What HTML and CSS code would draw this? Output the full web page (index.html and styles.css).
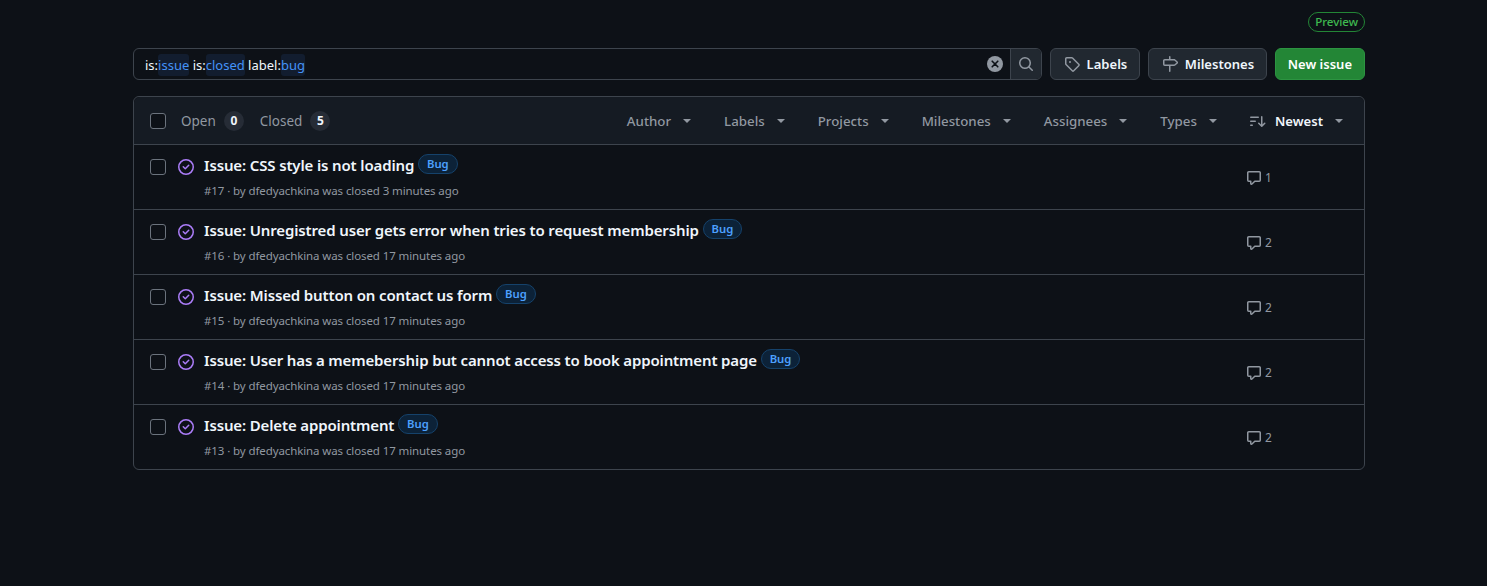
FILE: index.html
```html
<!DOCTYPE html>
<html lang="en">
<head>
    <meta charset="UTF-8">
    <meta name="viewport" content="width=device-width, initial-scale=1.0">
    <title>Issues</title>
    <link rel="stylesheet" href="styles.css">
</head>
<body>
    <div class="container">
        <div class="preview-row"><span class="preview">Preview</span></div>

        <div class="toolbar">
            <div class="search">
                <div class="query">is:<span class="tok">issue</span> is:<span class="tok">closed</span> label:<span class="tok">bug</span></div>
                <svg class="clear" width="16" height="16" viewBox="0 0 16 16"><circle cx="8" cy="8" r="8" fill="#9198a1"/><path d="M5.2 5.2l5.6 5.6M10.8 5.2l-5.6 5.6" stroke="#0d1117" stroke-width="1.6" stroke-linecap="round"/></svg>
                <div class="search-btn">
                    <svg width="16" height="16" viewBox="0 0 16 16" fill="#9198a1"><path d="M10.68 11.74a6 6 0 0 1-7.922-8.982 6 6 0 0 1 8.982 7.922l3.04 3.04a.749.749 0 0 1-.326 1.275.749.749 0 0 1-.734-.215ZM11.5 7a4.499 4.499 0 1 0-8.997 0A4.499 4.499 0 0 0 11.5 7Z"/></svg>
                </div>
            </div>
            <a class="btn"><svg width="16" height="16" viewBox="0 0 16 16" fill="#9198a1"><path d="M1 7.775V2.75C1 1.784 1.784 1 2.75 1h5.025c.464 0 .91.184 1.238.513l6.25 6.25a1.75 1.75 0 0 1 0 2.474l-5.026 5.026a1.75 1.75 0 0 1-2.474 0l-6.25-6.25A1.752 1.752 0 0 1 1 7.775Zm1.5 0c0 .066.026.13.073.177l6.25 6.25a.25.25 0 0 0 .354 0l5.025-5.025a.25.25 0 0 0 0-.354l-6.25-6.25a.25.25 0 0 0-.177-.073H2.75a.25.25 0 0 0-.25.25ZM6 5a1 1 0 1 1 0 2 1 1 0 0 1 0-2Z"/></svg>Labels</a>
            <a class="btn"><svg width="16" height="16" viewBox="0 0 16 16" fill="#9198a1"><path d="M7.75 0a.75.75 0 0 1 .75.75V3h3.634c.414 0 .814.147 1.13.414l2.07 1.75a1.75 1.75 0 0 1 0 2.672l-2.07 1.75a1.75 1.75 0 0 1-1.13.414H8.5v5.25a.75.75 0 0 1-1.5 0V10H2.75A1.75 1.75 0 0 1 1 8.25v-3.5C1 3.784 1.784 3 2.75 3H7V.75A.75.75 0 0 1 7.75 0Zm4.384 8.5a.25.25 0 0 0 .161-.06l2.07-1.75a.248.248 0 0 0 0-.38l-2.07-1.75a.25.25 0 0 0-.161-.06H2.75a.25.25 0 0 0-.25.25v3.5c0 .138.112.25.25.25h9.384Z"/></svg>Milestones</a>
            <a class="btn btn-green">New issue</a>
        </div>

        <div class="box">
            <div class="box-head">
                <span class="check"></span>
                <div class="states">
                    <span class="state">Open <b class="count">0</b></span>
                    <span class="state">Closed <b class="count">5</b></span>
                </div>
                <div class="filters">
                    <span class="filter">Author<i class="caret"></i></span>
                    <span class="filter">Labels<i class="caret"></i></span>
                    <span class="filter">Projects<i class="caret"></i></span>
                    <span class="filter">Milestones<i class="caret"></i></span>
                    <span class="filter">Assignees<i class="caret"></i></span>
                    <span class="filter">Types<i class="caret"></i></span>
                    <span class="filter sort"><svg width="16" height="16" viewBox="0 0 16 16" fill="#9198a1"><path d="M0 4.25a.75.75 0 0 1 .75-.75h7.5a.75.75 0 0 1 0 1.5H.75A.75.75 0 0 1 0 4.25Zm0 4a.75.75 0 0 1 .75-.75h4.5a.75.75 0 0 1 0 1.5H.75A.75.75 0 0 1 0 8.25Zm0 4a.75.75 0 0 1 .75-.75h1.5a.75.75 0 0 1 0 1.5H.75a.75.75 0 0 1-.75-.75ZM12.5 3.75a.75.75 0 0 0-1.5 0v7.69l-1.72-1.72a.75.75 0 1 0-1.06 1.06l3 3a.75.75 0 0 0 1.06 0l3-3a.75.75 0 1 0-1.06-1.06l-1.72 1.72Z"/></svg><strong>Newest</strong><i class="caret"></i></span>
                </div>
            </div>

            <div class="row">
                <span class="check"></span>
                <svg class="closed-icon" width="16" height="16" viewBox="0 0 16 16" fill="#ab7df8"><path d="M11.28 6.78a.75.75 0 0 0-1.06-1.06L7.25 8.69 5.78 7.22a.75.75 0 0 0-1.06 1.06l2 2a.75.75 0 0 0 1.06 0l3.5-3.5Z"/><path d="M16 8A8 8 0 1 1 0 8a8 8 0 0 1 16 0Zm-1.5 0a6.5 6.5 0 1 0-13 0 6.5 6.5 0 0 0 13 0Z"/></svg>
                <div class="main">
                    <div class="title">Issue: CSS style is not loading <span class="bug">Bug</span></div>
                    <div class="meta">#17 · by dfedyachkina was closed 3 minutes ago</div>
                </div>
                <div class="comments"><svg width="16" height="16" viewBox="0 0 16 16" fill="#9198a1"><path d="M1 2.75C1 1.784 1.784 1 2.75 1h10.5c.966 0 1.75.784 1.75 1.75v7.5A1.75 1.75 0 0 1 13.25 12H9.06l-2.573 2.573A1.458 1.458 0 0 1 4 13.543V12H2.75A1.75 1.75 0 0 1 1 10.25Zm1.75-.25a.25.25 0 0 0-.25.25v7.5c0 .138.112.25.25.25h2a.75.75 0 0 1 .75.75v2.19l2.72-2.72a.749.749 0 0 1 .53-.22h4.5a.25.25 0 0 0 .25-.25v-7.5a.25.25 0 0 0-.25-.25Z"/></svg>1</div>
            </div>
            <div class="row">
                <span class="check"></span>
                <svg class="closed-icon" width="16" height="16" viewBox="0 0 16 16" fill="#ab7df8"><path d="M11.28 6.78a.75.75 0 0 0-1.06-1.06L7.25 8.69 5.78 7.22a.75.75 0 0 0-1.06 1.06l2 2a.75.75 0 0 0 1.06 0l3.5-3.5Z"/><path d="M16 8A8 8 0 1 1 0 8a8 8 0 0 1 16 0Zm-1.5 0a6.5 6.5 0 1 0-13 0 6.5 6.5 0 0 0 13 0Z"/></svg>
                <div class="main">
                    <div class="title">Issue: Unregistred user gets error when tries to request membership <span class="bug">Bug</span></div>
                    <div class="meta">#16 · by dfedyachkina was closed 17 minutes ago</div>
                </div>
                <div class="comments"><svg width="16" height="16" viewBox="0 0 16 16" fill="#9198a1"><path d="M1 2.75C1 1.784 1.784 1 2.75 1h10.5c.966 0 1.75.784 1.75 1.75v7.5A1.75 1.75 0 0 1 13.25 12H9.06l-2.573 2.573A1.458 1.458 0 0 1 4 13.543V12H2.75A1.75 1.75 0 0 1 1 10.25Zm1.75-.25a.25.25 0 0 0-.25.25v7.5c0 .138.112.25.25.25h2a.75.75 0 0 1 .75.75v2.19l2.72-2.72a.749.749 0 0 1 .53-.22h4.5a.25.25 0 0 0 .25-.25v-7.5a.25.25 0 0 0-.25-.25Z"/></svg>2</div>
            </div>
            <div class="row">
                <span class="check"></span>
                <svg class="closed-icon" width="16" height="16" viewBox="0 0 16 16" fill="#ab7df8"><path d="M11.28 6.78a.75.75 0 0 0-1.06-1.06L7.25 8.69 5.78 7.22a.75.75 0 0 0-1.06 1.06l2 2a.75.75 0 0 0 1.06 0l3.5-3.5Z"/><path d="M16 8A8 8 0 1 1 0 8a8 8 0 0 1 16 0Zm-1.5 0a6.5 6.5 0 1 0-13 0 6.5 6.5 0 0 0 13 0Z"/></svg>
                <div class="main">
                    <div class="title">Issue: Missed button on contact us form <span class="bug">Bug</span></div>
                    <div class="meta">#15 · by dfedyachkina was closed 17 minutes ago</div>
                </div>
                <div class="comments"><svg width="16" height="16" viewBox="0 0 16 16" fill="#9198a1"><path d="M1 2.75C1 1.784 1.784 1 2.75 1h10.5c.966 0 1.75.784 1.75 1.75v7.5A1.75 1.75 0 0 1 13.25 12H9.06l-2.573 2.573A1.458 1.458 0 0 1 4 13.543V12H2.75A1.75 1.75 0 0 1 1 10.25Zm1.75-.25a.25.25 0 0 0-.25.25v7.5c0 .138.112.25.25.25h2a.75.75 0 0 1 .75.75v2.19l2.72-2.72a.749.749 0 0 1 .53-.22h4.5a.25.25 0 0 0 .25-.25v-7.5a.25.25 0 0 0-.25-.25Z"/></svg>2</div>
            </div>
            <div class="row">
                <span class="check"></span>
                <svg class="closed-icon" width="16" height="16" viewBox="0 0 16 16" fill="#ab7df8"><path d="M11.28 6.78a.75.75 0 0 0-1.06-1.06L7.25 8.69 5.78 7.22a.75.75 0 0 0-1.06 1.06l2 2a.75.75 0 0 0 1.06 0l3.5-3.5Z"/><path d="M16 8A8 8 0 1 1 0 8a8 8 0 0 1 16 0Zm-1.5 0a6.5 6.5 0 1 0-13 0 6.5 6.5 0 0 0 13 0Z"/></svg>
                <div class="main">
                    <div class="title">Issue: User has a memebership but cannot access to book appointment page <span class="bug">Bug</span></div>
                    <div class="meta">#14 · by dfedyachkina was closed 17 minutes ago</div>
                </div>
                <div class="comments"><svg width="16" height="16" viewBox="0 0 16 16" fill="#9198a1"><path d="M1 2.75C1 1.784 1.784 1 2.75 1h10.5c.966 0 1.75.784 1.75 1.75v7.5A1.75 1.75 0 0 1 13.25 12H9.06l-2.573 2.573A1.458 1.458 0 0 1 4 13.543V12H2.75A1.75 1.75 0 0 1 1 10.25Zm1.75-.25a.25.25 0 0 0-.25.25v7.5c0 .138.112.25.25.25h2a.75.75 0 0 1 .75.75v2.19l2.72-2.72a.749.749 0 0 1 .53-.22h4.5a.25.25 0 0 0 .25-.25v-7.5a.25.25 0 0 0-.25-.25Z"/></svg>2</div>
            </div>
            <div class="row">
                <span class="check"></span>
                <svg class="closed-icon" width="16" height="16" viewBox="0 0 16 16" fill="#ab7df8"><path d="M11.28 6.78a.75.75 0 0 0-1.06-1.06L7.25 8.69 5.78 7.22a.75.75 0 0 0-1.06 1.06l2 2a.75.75 0 0 0 1.06 0l3.5-3.5Z"/><path d="M16 8A8 8 0 1 1 0 8a8 8 0 0 1 16 0Zm-1.5 0a6.5 6.5 0 1 0-13 0 6.5 6.5 0 0 0 13 0Z"/></svg>
                <div class="main">
                    <div class="title">Issue: Delete appointment <span class="bug">Bug</span></div>
                    <div class="meta">#13 · by dfedyachkina was closed 17 minutes ago</div>
                </div>
                <div class="comments"><svg width="16" height="16" viewBox="0 0 16 16" fill="#9198a1"><path d="M1 2.75C1 1.784 1.784 1 2.75 1h10.5c.966 0 1.75.784 1.75 1.75v7.5A1.75 1.75 0 0 1 13.25 12H9.06l-2.573 2.573A1.458 1.458 0 0 1 4 13.543V12H2.75A1.75 1.75 0 0 1 1 10.25Zm1.75-.25a.25.25 0 0 0-.25.25v7.5c0 .138.112.25.25.25h2a.75.75 0 0 1 .75.75v2.19l2.72-2.72a.749.749 0 0 1 .53-.22h4.5a.25.25 0 0 0 .25-.25v-7.5a.25.25 0 0 0-.25-.25Z"/></svg>2</div>
            </div>
        </div>
    </div>
</body>
</html>
```

FILE: styles.css
```css
* { box-sizing: border-box; }
body {
    margin: 0;
    background: #0d1117;
    color: #f0f6fc;
    font-family: "Noto Sans", sans-serif;
    font-size: 14px;
}
.container {
    width: 1232px;
    margin: 0 auto 0 133px;
    padding-top: 12px;
}
.preview-row {
    display: flex;
    justify-content: flex-end;
    margin-bottom: 16px;
}
.preview {
    height: 20px;
    line-height: 18px;
    padding: 0 6px;
    font-size: 11.5px;
    font-weight: 500;
    color: #3fb950;
    border: 1px solid #238636;
    border-radius: 10px;
}

.toolbar {
    display: flex;
    gap: 8px;
    height: 32px;
    margin-bottom: 16px;
}
.search {
    flex: 1;
    display: flex;
    align-items: center;
    border: 1px solid #3d444d;
    border-radius: 6px;
    padding-left: 11px;
}
.query { flex: 1; font-size: 13px; padding-top: 1px; }
.tok {
    color: #4493f8;
    background: #121d2f;
    border-radius: 3px;
    padding: 2px 0;
}
.clear { margin-right: 7px; }
.search-btn {
    width: 31px;
    height: 30px;
    display: flex;
    align-items: center;
    justify-content: center;
    background: #212830;
    border-left: 1px solid #3d444d;
    border-radius: 0 5px 5px 0;
}
.btn {
    display: flex;
    align-items: center;
    gap: 7px;
    padding: 0 11.6px 0 13px;
    font-weight: 600;
    font-size: 13.05px;
    background: #212830;
    border: 1px solid #3d444d;
    border-radius: 6px;
}
.btn-green {
    padding: 0 12px;
    font-size: 13px;
    background: #238636;
    border-color: #2c9441;
    color: #fff;
}

.box {
    border: 1px solid #3d444d;
    border-radius: 6px;
}
.box-head {
    height: 47px;
    display: flex;
    align-items: center;
    padding: 1px 0 0 16px;
    background: #151b23;
    border-radius: 6px 6px 0 0;
}
.check {
    width: 16px;
    height: 16px;
    flex: none;
    background: #0d1117;
    border: 1px solid #6b737d;
    border-radius: 3px;
}
.states {
    display: flex;
    gap: 16px;
    margin-left: 15px;
    font-size: 13.5px;
    color: #9198a1;
}
.state { display: flex; align-items: center; gap: 8px; }
.count {
    min-width: 20px;
    height: 20px;
    line-height: 20px;
    text-align: center;
    font-size: 12px;
    font-weight: 700;
    color: #f0f6fc;
    background: #262c36;
    border-radius: 10px;
}
.filters {
    display: flex;
    align-items: center;
    gap: 33px;
    margin-left: auto;
    padding-right: 21px;
    color: #9198a1;
    font-weight: 500;
    font-size: 13.3px;
}
.filter { display: flex; align-items: center; gap: 12px; }
.sort svg { margin-right: -3px; }
.sort strong { color: #f0f6fc; font-weight: 600; font-size: 13.1px; }
.caret {
    width: 0;
    height: 0;
    border-left: 4px solid transparent;
    border-right: 4px solid transparent;
    border-top: 4px solid #9198a1;
}

.row {
    height: 65px;
    display: flex;
    align-items: flex-start;
    padding: 14px 0 0 16px;
    border-top: 1px solid #3d444d;
}
.closed-icon { flex: none; margin: 0 0 0 12px; }
.main { flex: 1; margin: -5px 0 0 10px; }
.title {
    font-size: 15px;
    font-weight: 600;
    line-height: 20px;
    letter-spacing: -0.14px;
}
.bug {
    display: inline-block;
    height: 20px;
    line-height: 18px;
    padding: 0 8px;
    font-size: 11.3px;
    font-weight: 600;
    letter-spacing: 0;
    color: #4da0ff;
    background: #0c2238;
    border: 1px solid #15426b;
    border-radius: 10px;
    vertical-align: 3px;
}
.meta {
    margin-top: 8px;
    font-size: 11.5px;
    letter-spacing: -0.1px;
    color: #9198a1;
}
.comments {
    width: 118px;
    margin-top: 10px;
    display: flex;
    align-items: center;
    gap: 3px;
    font-size: 12px;
    color: #9198a1;
}
```
